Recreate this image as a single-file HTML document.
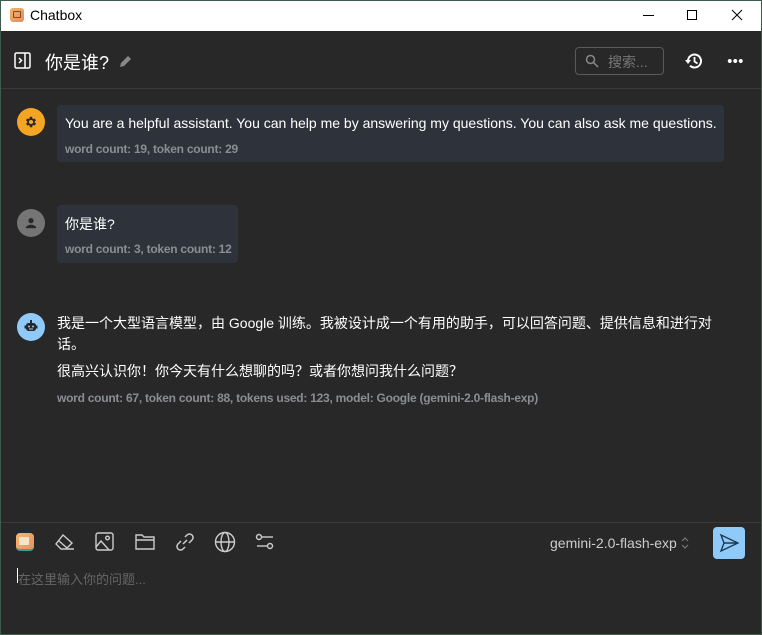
<!DOCTYPE html>
<html><head><meta charset="utf-8"><style>
*{margin:0;padding:0;box-sizing:border-box}
body{width:762px;height:635px;background:#282828;font-family:"Liberation Sans","Noto Sans CJK SC",sans-serif;position:relative;overflow:hidden}
.a{position:absolute}
.t{color:#fff;font-size:14px}
.m{color:#8a8d92;font-size:12px;font-weight:bold;letter-spacing:-0.25px}
.bub{background:#2e333b;border-radius:4px}
.av{width:28px;height:28px;border-radius:50%}
svg{display:block}
</style></head><body>
<div class="a" style="left:0;top:0;width:762px;height:31px;background:#fff"></div>
<div class="a" style="left:10px;top:8px;width:14px;height:14px;border-radius:3px;background:linear-gradient(135deg,#f3b46b,#e58c5c);"><div style="margin:3px;width:8px;height:7px;border:1px solid #7a4a2a;border-radius:1px"></div></div>
<div class="a" style="left:30px;top:7px;font-size:14px;color:#000">Chatbox</div>
<div class="a" style="left:643px;top:15px;width:11px;height:1px;background:#000"></div>
<div class="a" style="left:687px;top:10px;width:10px;height:10px;border:1px solid #000"></div>
<svg class="a" style="left:731px;top:9px" width="12" height="12"><path d="M1 1L11 11M11 1L1 11" stroke="#000" stroke-width="1"/></svg>

<svg class="a" style="left:14px;top:52px" width="18" height="18"><rect x="1" y="1" width="15" height="15" rx="1.5" fill="none" stroke="#fff" stroke-width="1.5"/><path d="M11 1v15M5 6l2.5 2.5L5 11" fill="none" stroke="#fff" stroke-width="1.5"/></svg>
<div class="a" style="left:45px;top:49px;font-size:18px;color:#fff">你是谁?</div>
<svg class="a" style="left:119px;top:54px" width="14" height="14"><path d="M1 13l1-4 7-7 3 3-7 7z" fill="#888"/></svg>
<div class="a" style="left:575px;top:47px;width:89px;height:28px;border:1px solid #5a5a5a;border-radius:4px"></div>
<svg class="a" style="left:585px;top:54px" width="14" height="14"><circle cx="5.5" cy="5.5" r="4" fill="none" stroke="#888" stroke-width="1.5"/><path d="M8.5 8.5L13 13" stroke="#888" stroke-width="1.5"/></svg>
<div class="a" style="left:608px;top:52px;font-size:14px;color:#777">搜索...</div>
<svg class="a" style="left:684px;top:51px" width="20" height="20"><path d="M4 10a6.5 6.5 0 1 1 2 4.7" fill="none" stroke="#fff" stroke-width="2"/><path d="M1 9h6l-3 4z" fill="#fff"/><path d="M10.5 6v4.5l3 2" fill="none" stroke="#fff" stroke-width="1.8"/></svg>
<div class="a" style="left:727px;top:59px;width:16px;height:4px;background:radial-gradient(circle,#fff 1.8px,transparent 2.2px) 0 0/5.5px 4px repeat-x"></div>
<div class="a" style="left:0;top:88px;width:762px;height:1px;background:#3a3a3a"></div>

<div class="a av" style="left:17px;top:108px;background:#f5a524"></div>
<svg class="a" style="left:24px;top:115px" width="14" height="14" viewBox="0 0 24 24"><path fill="#282828" d="M19.4 13a7.5 7.5 0 0 0 0-2l2.1-1.6-2-3.5-2.5 1a7 7 0 0 0-1.7-1L15 3h-4l-.4 2.9a7 7 0 0 0-1.7 1l-2.5-1-2 3.5L6.6 11a7.5 7.5 0 0 0 0 2l-2.1 1.6 2 3.5 2.5-1a7 7 0 0 0 1.7 1L11 21h4l.4-2.9a7 7 0 0 0 1.7-1l2.5 1 2-3.5zM13 15.5a3.5 3.5 0 1 1 0-7 3.5 3.5 0 0 1 0 7z" transform="translate(-1 0)"/></svg>
<div class="a bub" style="left:57px;top:105px;width:667px;height:57px"></div>
<div class="a t" style="left:65px;top:115px">You are a helpful assistant. You can help me by answering my questions. You can also ask me questions.</div>
<div class="a m" style="left:65px;top:142px">word count: 19, token count: 29</div>

<div class="a av" style="left:17px;top:209px;background:#757575"></div>
<svg class="a" style="left:24px;top:216px" width="14" height="14" viewBox="0 0 24 24"><circle cx="12" cy="8" r="4.5" fill="#282828"/><path d="M3 21c0-4 5-6 9-6s9 2 9 6z" fill="#282828"/></svg>
<div class="a bub" style="left:57px;top:205px;width:181px;height:58px"></div>
<div class="a t" style="left:65px;top:214px">你是谁?</div>
<div class="a m" style="left:65px;top:242px">word count: 3, token count: 12</div>

<div class="a av" style="left:17px;top:313px;background:#90caf9"></div>
<svg class="a" style="left:23px;top:318px" width="16" height="16" viewBox="0 0 16 16"><rect x="3" y="5" width="10" height="8" rx="2.5" fill="#282828"/><rect x="7" y="2" width="2" height="3" fill="#282828"/><rect x="1.5" y="7.5" width="2" height="3" fill="#282828"/><rect x="12.5" y="7.5" width="2" height="3" fill="#282828"/><circle cx="6" cy="8.5" r="1" fill="#90caf9"/><circle cx="10" cy="8.5" r="1" fill="#90caf9"/><rect x="6" y="10.5" width="4" height="1" fill="#90caf9"/></svg>
<div class="a t" style="left:57px;top:313px;width:670px;line-height:21px">我是一个大型语言模型，由 Google 训练。我被设计成一个有用的助手，可以回答问题、提供信息和进行对话。</div>
<div class="a t" style="left:57px;top:361px">很高兴认识你！你今天有什么想聊的吗？或者你想问我什么问题？</div>
<div class="a m" style="left:57px;top:391px">word count: 67, token count: 88, tokens used: 123, model: Google (gemini-2.0-flash-exp)</div>

<div class="a" style="left:0;top:522px;width:762px;height:1px;background:#3a3a3a"></div>
<div class="a" style="left:16px;top:533px;width:18px;height:18px;border-radius:4px;background:linear-gradient(135deg,#f5b870,#e8905e);border-bottom:2px solid #3aa090"><div style="margin:4px 3px;width:10px;height:8px;background:#f6e4c8;border-radius:1px"></div></div>
<svg class="a" style="left:54px;top:532px" width="22" height="20" fill="none" stroke="#ccc" stroke-width="1.4"><path d="M9 3l9 8-6 6H7l-5-5z M5 9l8 7 M8 17h12"/></svg>
<svg class="a" style="left:95px;top:532px" width="20" height="20" fill="none" stroke="#ccc" stroke-width="1.4"><rect x="1" y="1" width="17" height="17" rx="2"/><circle cx="12.5" cy="6" r="1.8"/><path d="M1 15l5-6 8 9"/></svg>
<svg class="a" style="left:135px;top:532px" width="21" height="20" fill="none" stroke="#ccc" stroke-width="1.4"><path d="M1 3h6l2 2h10v12H1z M1 8h18"/></svg>
<svg class="a" style="left:174px;top:531px" width="22" height="22" fill="none" stroke="#ccc" stroke-width="1.5"><path d="M9 13l4-4 M11 6l2-2a3.5 3.5 0 0 1 5 5l-3 3 M11 16l-2 2a3.5 3.5 0 0 1-5-5l3-3"/></svg>
<svg class="a" style="left:214px;top:531px" width="22" height="22" fill="none" stroke="#ccc" stroke-width="1.4"><circle cx="11" cy="11" r="9.5"/><ellipse cx="11" cy="11" rx="4" ry="9.5"/><path d="M1.5 11h19"/></svg>
<svg class="a" style="left:255px;top:532px" width="20" height="20" fill="none" stroke="#ccc" stroke-width="1.4"><circle cx="4" cy="5" r="2.5"/><path d="M7 5h11"/><circle cx="15" cy="14" r="2.5"/><path d="M2 14h10"/></svg>
<div class="a" style="left:550px;top:535px;font-size:14px;color:#ccc">gemini-2.0-flash-exp</div>
<svg class="a" style="left:680px;top:536px" width="10" height="14" fill="none" stroke="#777" stroke-width="1.2"><path d="M2 5l3-3 3 3M2 9l3 3 3-3"/></svg>
<div class="a" style="left:713px;top:527px;width:32px;height:32px;border-radius:4px;background:#90caf9"></div>
<svg class="a" style="left:719px;top:533px" width="20" height="20" fill="none" stroke="#1e3a50" stroke-width="1.4"><path d="M2 2l17 8-17 8 3-8z M5 10h14"/></svg>
<div class="a" style="left:17px;top:568px;width:1px;height:15px;background:#fff"></div>
<div class="a" style="left:18px;top:569px;font-size:13px;color:#666">在这里输入你的问题...</div>
<div class="a" style="left:0;top:0;width:762px;height:635px;border:1px solid #3d5c4c;pointer-events:none"></div>
</body></html>
